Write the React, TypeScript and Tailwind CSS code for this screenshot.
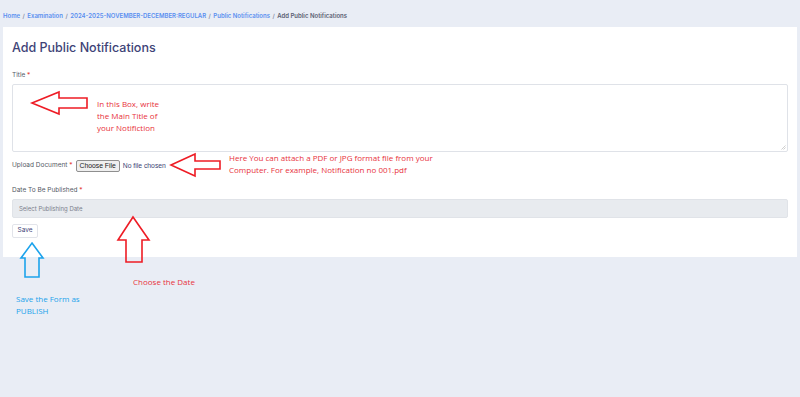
export default function App() {
  const font = { fontFamily: 'Inter, "Liberation Sans", sans-serif' }
  const note = { fontFamily: '"Open Sans", "Noto Sans", sans-serif' }
  return (
    <div className="relative w-[800px] h-[397px] bg-[#e9edf5] overflow-hidden" style={font}>
      {/* Breadcrumb */}
      <div className="h-[27px] pt-[3px] flex items-center px-[3px] text-[6px] font-semibold gap-[2.5px]">
        <span className="text-[#5a8ff0]">Home</span>
        <span className="text-[#8a8fa6]">/</span>
        <span className="text-[#5a8ff0]">Examination</span>
        <span className="text-[#8a8fa6]">/</span>
        <span className="text-[#5a8ff0]">2024-2025-NOVEMBER-DECEMBER:REGULAR</span>
        <span className="text-[#8a8fa6]">/</span>
        <span className="text-[#5a8ff0]">Public Notifications</span>
        <span className="text-[#8a8fa6]">/</span>
        <span className="text-[#5b5f73]">Add Public Notifications</span>
      </div>

      {/* Card */}
      <div className="mx-[3px] bg-white px-[9px] pt-[13px] pb-[19px]">
        <h1 className="text-[12.5px] leading-[16px] font-medium text-[#3e4377]">Add Public Notifications</h1>

        <div className="mt-[14px] text-[6.5px] leading-[10px] text-[#555a66]">
          Title <span className="text-[#e53935]">*</span>
        </div>
        <div className="mt-[4px] h-[68px] border border-[#dfe2e8] rounded-[2px] relative">
          <div className="absolute right-[1px] bottom-[1px] w-[5px] h-[5px] text-[#b0b0b0]">
            <svg viewBox="0 0 5 5" className="w-[5px] h-[5px]">
              <path d="M4.5 0.5 L0.5 4.5 M4.5 2.5 L2.5 4.5" stroke="currentColor" strokeWidth="0.6" />
            </svg>
          </div>
        </div>

        <div className="mt-[8px] h-[12px] flex items-center text-[6.5px] text-[#555a66]">
          <span>Upload Document <span className="text-[#e53935]">*</span></span>
          <span className="ml-[3px] h-[12px] px-[3px] flex items-center border border-[#8f8f8f] bg-[#efefef] rounded-[2px] text-[6.8px] text-[#222] font-['Liberation_Sans',sans-serif]">Choose File</span>
          <span className="ml-[3px] text-[6.8px] text-[#3d4576] font-['Liberation_Sans',sans-serif]">No file chosen</span>
        </div>

        <div className="mt-[13px] text-[6.5px] leading-[10px] text-[#555a66]">
          Date To Be Published <span className="text-[#e53935]">*</span>
        </div>
        <div className="mt-[4px] h-[19px] bg-[#e8ebef] border border-[#e0e3e8] rounded-[2px] flex items-center px-[6px] text-[6px] text-[#7c808c]">
          Select Publishing Date
        </div>

        <div className="mt-[6px] w-[26px] h-[14px] border border-[#e2e4ea] rounded-[2px] flex items-center justify-center text-[6.5px] text-[#3e4377]">
          Save
        </div>
      </div>

      {/* Annotation arrows */}
      <svg className="absolute left-0 top-0 w-[800px] h-[397px] pointer-events-none" viewBox="0 0 800 397" fill="none" strokeWidth="1.6" strokeLinejoin="miter">
        <path d="M32 103 L59 92 L59 98 L87 98 L87 108 L59 108 L59 114 Z" stroke="#ee1c25" />
        <path d="M171 165 L195 154 L195 161 L220 161 L220 169 L195 169 L195 176 Z" stroke="#ee1c25" />
        <path d="M133 217 L149 240 L142 240 L142 262 L126 262 L126 240 L118 240 Z" stroke="#ee1c25" />
        <path d="M32 243 L43 258 L39 258 L39 277 L25 277 L25 258 L21 258 Z" stroke="#1ca3ec" />
      </svg>

      {/* Annotation texts */}
      <div className="absolute left-[97px] top-[98px] text-[8px] leading-[12px] text-[#e8323c]" style={note}>
        In this Box, write<br />the Main Title of<br />your Notifiction
      </div>
      <div className="absolute left-[229px] top-[152px] text-[8px] leading-[12px] text-[#e8323c]" style={note}>
        Here You can attach a PDF or JPG format file from your<br />Computer. For example, Notification no 001.pdf
      </div>
      <div className="absolute left-[133px] top-[276px] text-[8px] leading-[12px] text-[#e8323c]" style={note}>
        Choose the Date
      </div>
      <div className="absolute left-[16px] top-[293px] text-[8px] leading-[12px] text-[#1ca3ec]" style={note}>
        Save the Form as<br />PUBLISH
      </div>
    </div>
  )
}
